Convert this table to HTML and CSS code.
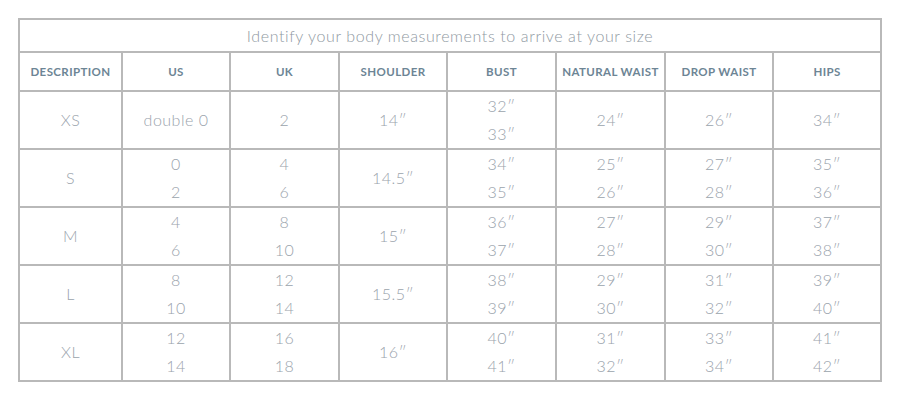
FILE: index.html
```html
<!DOCTYPE html>
<html>
<head>
<meta charset="utf-8">
<link rel="stylesheet" href="styles.css">
</head>
<body>
<div class="wrap">
<table class="chart">
  <colgroup>
    <col class="c1"><col class="c2"><col class="c3"><col class="c4"><col class="c5"><col class="c6"><col class="c7"><col class="c8">
  </colgroup>
  <tr class="title-row"><td colspan="8" class="title">Identify your body measurements to arrive at your size</td></tr>
  <tr class="head-row">
    <th>DESCRIPTION</th><th>US</th><th>UK</th><th>SHOULDER</th><th>BUST</th><th>NATURAL WAIST</th><th>DROP WAIST</th><th>HIPS</th>
  </tr>
  <tr class="data-row">
    <td>XS</td><td>double 0</td><td>2</td><td>14″</td>
    <td><div class="pair"><span>32″</span><span>33″</span></div></td>
    <td>24″</td><td>26″</td><td>34″</td>
  </tr>
  <tr class="data-row">
    <td>S</td>
    <td><div class="pair"><span>0</span><span>2</span></div></td>
    <td><div class="pair"><span>4</span><span>6</span></div></td>
    <td>14.5″</td>
    <td><div class="pair"><span>34″</span><span>35″</span></div></td>
    <td><div class="pair"><span>25″</span><span>26″</span></div></td>
    <td><div class="pair"><span>27″</span><span>28″</span></div></td>
    <td><div class="pair"><span>35″</span><span>36″</span></div></td>
  </tr>
  <tr class="data-row">
    <td>M</td>
    <td><div class="pair"><span>4</span><span>6</span></div></td>
    <td><div class="pair"><span>8</span><span>10</span></div></td>
    <td>15″</td>
    <td><div class="pair"><span>36″</span><span>37″</span></div></td>
    <td><div class="pair"><span>27″</span><span>28″</span></div></td>
    <td><div class="pair"><span>29″</span><span>30″</span></div></td>
    <td><div class="pair"><span>37″</span><span>38″</span></div></td>
  </tr>
  <tr class="data-row">
    <td>L</td>
    <td><div class="pair"><span>8</span><span>10</span></div></td>
    <td><div class="pair"><span>12</span><span>14</span></div></td>
    <td>15.5″</td>
    <td><div class="pair"><span>38″</span><span>39″</span></div></td>
    <td><div class="pair"><span>29″</span><span>30″</span></div></td>
    <td><div class="pair"><span>31″</span><span>32″</span></div></td>
    <td><div class="pair"><span>39″</span><span>40″</span></div></td>
  </tr>
  <tr class="data-row">
    <td>XL</td>
    <td><div class="pair"><span>12</span><span>14</span></div></td>
    <td><div class="pair"><span>16</span><span>18</span></div></td>
    <td>16″</td>
    <td><div class="pair"><span>40″</span><span>41″</span></div></td>
    <td><div class="pair"><span>31″</span><span>32″</span></div></td>
    <td><div class="pair"><span>33″</span><span>34″</span></div></td>
    <td><div class="pair"><span>41″</span><span>42″</span></div></td>
  </tr>
</table>
</div>
</body>
</html>
```

FILE: styles.css
```css
html, body {
  margin: 0;
  padding: 0;
  background: #ffffff;
}
.wrap {
  padding: 18px 0 0 18px;
}
.chart {
  border-collapse: collapse;
  table-layout: fixed;
  width: 864px;
  font-family: "Lato", "Open Sans", sans-serif;
  font-weight: 300;
  color: #9aa3ac;
}
.chart td, .chart th {
  border: 2px solid #b9b9b9;
  text-align: center;
  vertical-align: middle;
  padding: 0;
}
.c1 { width: 103px; }
.c2 { width: 108px; }
.c3 { width: 109px; }
.c4 { width: 108px; }
.c5 { width: 109px; }
.c6 { width: 109px; }
.c7 { width: 108px; }
.c8 { width: 108px; }
.title-row { height: 33px; }
.title {
  font-size: 16px;
  line-height: 20px;
  color: #8f99a2;
  letter-spacing: 0.6px;
}
.head-row { height: 39px; }
.head-row th {
  font-family: "Lato", sans-serif;
  font-weight: 700;
  font-size: 11.5px;
  letter-spacing: 0.4px;
  color: #6d8595;
}
.data-row { height: 58px; }
.data-row td {
  font-size: 16px;
  letter-spacing: 0.5px;
  line-height: 20px;
}
.pair {
  display: flex;
  flex-direction: column;
  line-height: 28px;
}
```
